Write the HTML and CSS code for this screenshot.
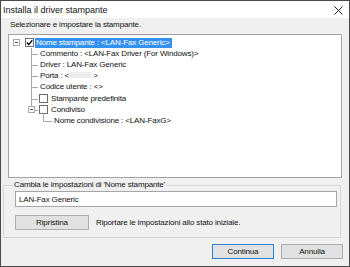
FILE: index.html
```html
<!DOCTYPE html>
<html lang="it">
<head>
    <meta charset="UTF-8">
    <meta name="viewport" content="width=device-width, initial-scale=1.0">
    <title>Installa il driver stampante</title>
    <link rel="stylesheet" href="styles.css">
</head>
<body>

    <div class="window">
        <div class="titlebar">
            <span class="title">Installa il driver stampante</span>
            <svg class="close" width="9" height="9" viewBox="0 0 9 9">
                <path d="M0.5 0.5 L8.5 8.5 M8.5 0.5 L0.5 8.5" stroke="#222" stroke-width="1" fill="none"/>
            </svg>
        </div>

        <div class="content">
            <p class="prompt">Selezionare e impostare la stampante.</p>

            <div class="tree">
                <div class="row root-row">
                    <span class="toggle"></span>
                    <span class="check checked">
                        <svg width="7" height="7" viewBox="0 0 7 7"><path d="M0.8 3.6 L2.7 5.6 L6.3 1.2" stroke="#111" stroke-width="1.4" fill="none"/></svg>
                    </span>
                    <span class="label selected">Nome stampante : &lt;LAN-Fax Generic&gt;</span>
                </div>
                <ul class="children">
                    <li><div class="row"><span class="label">Commento : &lt;LAN-Fax Driver (For Windows)&gt;</span></div></li>
                    <li><div class="row"><span class="label">Driver : LAN-Fax Generic</span></div></li>
                    <li><div class="row"><span class="label">Porta : &lt;<span class="masked"></span>&gt;</span></div></li>
                    <li><div class="row"><span class="label">Codice utente : &lt;&gt;</span></div></li>
                    <li><div class="row"><span class="check"></span><span class="label">Stampante predefinita</span></div></li>
                    <li class="has-kids">
                        <span class="toggle small"></span>
                        <div class="row"><span class="check"></span><span class="label">Condiviso</span></div>
                        <ul class="grandchildren">
                            <li><div class="row"><span class="label">Nome condivisione : &lt;LAN-FaxG&gt;</span></div></li>
                        </ul>
                    </li>
                </ul>
            </div>

            <fieldset class="group">
                <legend>Cambia le impostazioni di 'Nome stampante'</legend>
                <input class="field" type="text" value="LAN-Fax Generic">
                <div class="reset-row">
                    <button class="btn reset">Ripristina</button>
                    <span>Riportare le impostazioni allo stato iniziale.</span>
                </div>
            </fieldset>
        </div>

        <div class="actions">
            <button class="btn primary">Continua</button>
            <button class="btn">Annulla</button>
        </div>
    </div>

</body>
</html>
```

FILE: styles.css
```css
body {
    margin: 0;
    padding: 0;
    font-family: "Liberation Sans", Arial, sans-serif;
    font-size: 8px;
    letter-spacing: -0.15px;
    color: #111;
    background-color: #fff;
}

.window {
    width: 350px;
    height: 267px;
    box-sizing: border-box;
    border: 1px solid #4a4a4a;
    background-color: #f0f0f0;
    display: flex;
    flex-direction: column;
}

.titlebar {
    height: 17px;
    background-color: #fff;
    display: flex;
    align-items: center;
    justify-content: space-between;
    padding: 0 6px 0 2px;
}

.title {
    font-size: 9px;
    letter-spacing: 0;
    margin-top: 1px;
}

.close {
    margin-top: 1px;
}

.content {
    padding: 0 7px 0 7px;
}

.prompt {
    margin: 2px 0 4px 2px;
    height: 10px;
    line-height: 10px;
}

/* tree view */
.tree {
    height: 144px;
    box-sizing: border-box;
    border: 1px solid #a3a3a3;
    background-color: #fff;
    padding-top: 2px;
}

.row {
    height: 11.2px;
    display: flex;
    align-items: center;
    line-height: 10px;
    white-space: nowrap;
}

.toggle {
    width: 7px;
    height: 7px;
    box-sizing: border-box;
    border: 1px solid #a8a8a8;
    background-color: #fff;
    position: relative;
}

.toggle::after {
    content: "";
    position: absolute;
    left: 1px;
    right: 1px;
    top: 2px;
    height: 1px;
    background-color: #555;
}

.root-row .toggle {
    margin-left: 4px;
    margin-right: 5px;
}

.check {
    width: 9px;
    height: 9px;
    box-sizing: border-box;
    border: 1px solid #6e6e6e;
    background-color: #fff;
    display: flex;
    align-items: center;
    justify-content: center;
    margin-right: 2px;
}

.root-row .check {
    margin-right: 1px;
}

.label {
    padding: 0 1px;
}

.selected {
    background-color: #3391f0;
    color: #fff;
    padding: 0 2px 0 1px;
}

.masked {
    display: inline-block;
    width: 22px;
    height: 6px;
    margin: 0 1px;
    background-color: #ececec;
}

.children,
.grandchildren {
    list-style: none;
    margin: 0;
    padding: 0;
}

.children > li {
    position: relative;
    padding-left: 30px;
}

.children > li::before {
    content: "";
    position: absolute;
    left: 22px;
    top: 0;
    bottom: 0;
    border-left: 1px solid #a8a8a8;
}

.children > li:last-child::before {
    bottom: auto;
    height: 6px;
}

.children > li::after {
    content: "";
    position: absolute;
    left: 22px;
    top: 5.6px;
    width: 7px;
    border-top: 1px solid #a8a8a8;
}

.toggle.small {
    position: absolute;
    left: 19px;
    top: 2px;
    z-index: 1;
}

.grandchildren > li {
    position: relative;
    padding-left: 14px;
}

.grandchildren > li::before {
    content: "";
    position: absolute;
    left: 4px;
    top: -2px;
    height: 8px;
    border-left: 1px solid #a8a8a8;
}

.grandchildren > li::after {
    content: "";
    position: absolute;
    left: 4px;
    top: 5.6px;
    width: 9px;
    border-top: 1px solid #a8a8a8;
}

/* settings group */
.group {
    margin: 2px 1px 0 -5px;
    padding: 0 3px 7px 11px;
    border: 1px solid #d5d5d5;
    border-radius: 0;
}

.group legend {
    margin-left: -2px;
    padding: 0 1px;
    line-height: 10px;
}

.field {
    display: block;
    width: 322px;
    height: 16px;
    box-sizing: border-box;
    margin: 1px 0 0 0;
    padding: 0 3px;
    border: 1px solid #a6a6a6;
    background-color: #fff;
    font-family: inherit;
    font-size: 8px;
    letter-spacing: -0.15px;
    color: #111;
}

.reset-row {
    display: flex;
    align-items: center;
    margin-top: 8px;
}

.reset-row span {
    margin-left: 7px;
}

.btn {
    height: 15px;
    box-sizing: border-box;
    border: 1px solid #adadad;
    background-color: #e1e1e1;
    font-family: inherit;
    font-size: 8px;
    letter-spacing: -0.15px;
    color: #111;
    padding: 0;
}

.reset {
    width: 74px;
}

.actions {
    display: flex;
    justify-content: flex-end;
    gap: 7px;
    padding: 6px 6px 0 0;
}

.actions .btn {
    width: 62px;
}

.primary {
    border-color: #2f7fd0;
}
```
